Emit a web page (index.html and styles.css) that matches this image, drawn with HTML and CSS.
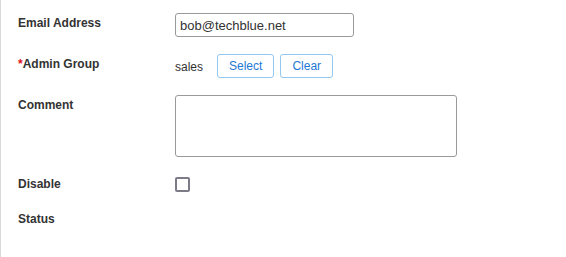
FILE: index.html
```html
<!DOCTYPE html>
<html>
<head>
<meta charset="utf-8">
<link rel="stylesheet" href="styles.css">
</head>
<body>
<div class="page">
  <form class="form">
    <div class="row">
      <label class="label">Email Address</label>
      <div class="field"><input class="text-input" type="text" value="bob@techblue.net"></div>
    </div>
    <div class="row">
      <label class="label"><span class="req">*</span>Admin Group</label>
      <div class="field group">
        <span class="value">sales</span>
        <button type="button" class="btn">Select</button>
        <button type="button" class="btn">Clear</button>
      </div>
    </div>
    <div class="row">
      <label class="label">Comment</label>
      <div class="field"><textarea class="textarea"></textarea></div>
    </div>
    <div class="row row-check">
      <label class="label">Disable</label>
      <div class="field"><input class="check" type="checkbox"></div>
    </div>
    <div class="row">
      <label class="label">Status</label>
      <div class="field"></div>
    </div>
  </form>
</div>
</body>
</html>
```
FILE: styles.css
```css
html, body {
  margin: 0;
  padding: 0;
  background: #fff;
}
body {
  font-family: "Liberation Sans", Arial, sans-serif;
  color: #333;
  width: 566px;
  height: 257px;
  overflow: hidden;
}
.page {
  border-left: 1px solid #d9d9d9;
  height: 257px;
  box-sizing: border-box;
  padding: 13px 0 0 17px;
}
.form {
  display: flex;
  flex-direction: column;
  gap: 17px;
}
.row {
  display: flex;
  align-items: flex-start;
}
.label {
  width: 157px;
  flex: none;
  font-size: 12px;
  font-weight: bold;
  line-height: 14px;
  padding-top: 3px;
  color: #333;
}
.req {
  color: #e0101a;
}
.field {
  display: flex;
  align-items: center;
}
.text-input {
  box-sizing: border-box;
  width: 179px;
  height: 24px;
  border: 1px solid #999;
  border-radius: 3px;
  padding: 0 4px;
  font-family: "Liberation Sans", Arial, sans-serif;
  font-size: 13px;
  color: #333;
  outline: none;
  margin: 0;
}
.group {
  height: 24px;
}
.value {
  font-size: 12px;
  color: #333;
  margin-right: 14px;
  position: relative;
  top: 1px;
}
.btn {
  box-sizing: border-box;
  height: 24px;
  padding: 0 11px;
  margin: 0 6px 0 0;
  background: #fff;
  border: 1px solid #92c7f2;
  border-radius: 3px;
  color: #1d78d4;
  font-family: "Liberation Sans", Arial, sans-serif;
  font-size: 12px;
  line-height: 22px;
}
.textarea {
  box-sizing: border-box;
  width: 282px;
  height: 62px;
  border: 1px solid #999;
  border-radius: 3px;
  margin: 0;
  padding: 4px;
  resize: none;
  outline: none;
  font-family: "Liberation Sans", Arial, sans-serif;
}
.check {
  appearance: none;
  -webkit-appearance: none;
  box-sizing: border-box;
  width: 15px;
  height: 15px;
  margin: 3px 0 0 0;
  border: 2px solid #7d7b88;
  border-radius: 2px;
  background: #fff;
}
```
